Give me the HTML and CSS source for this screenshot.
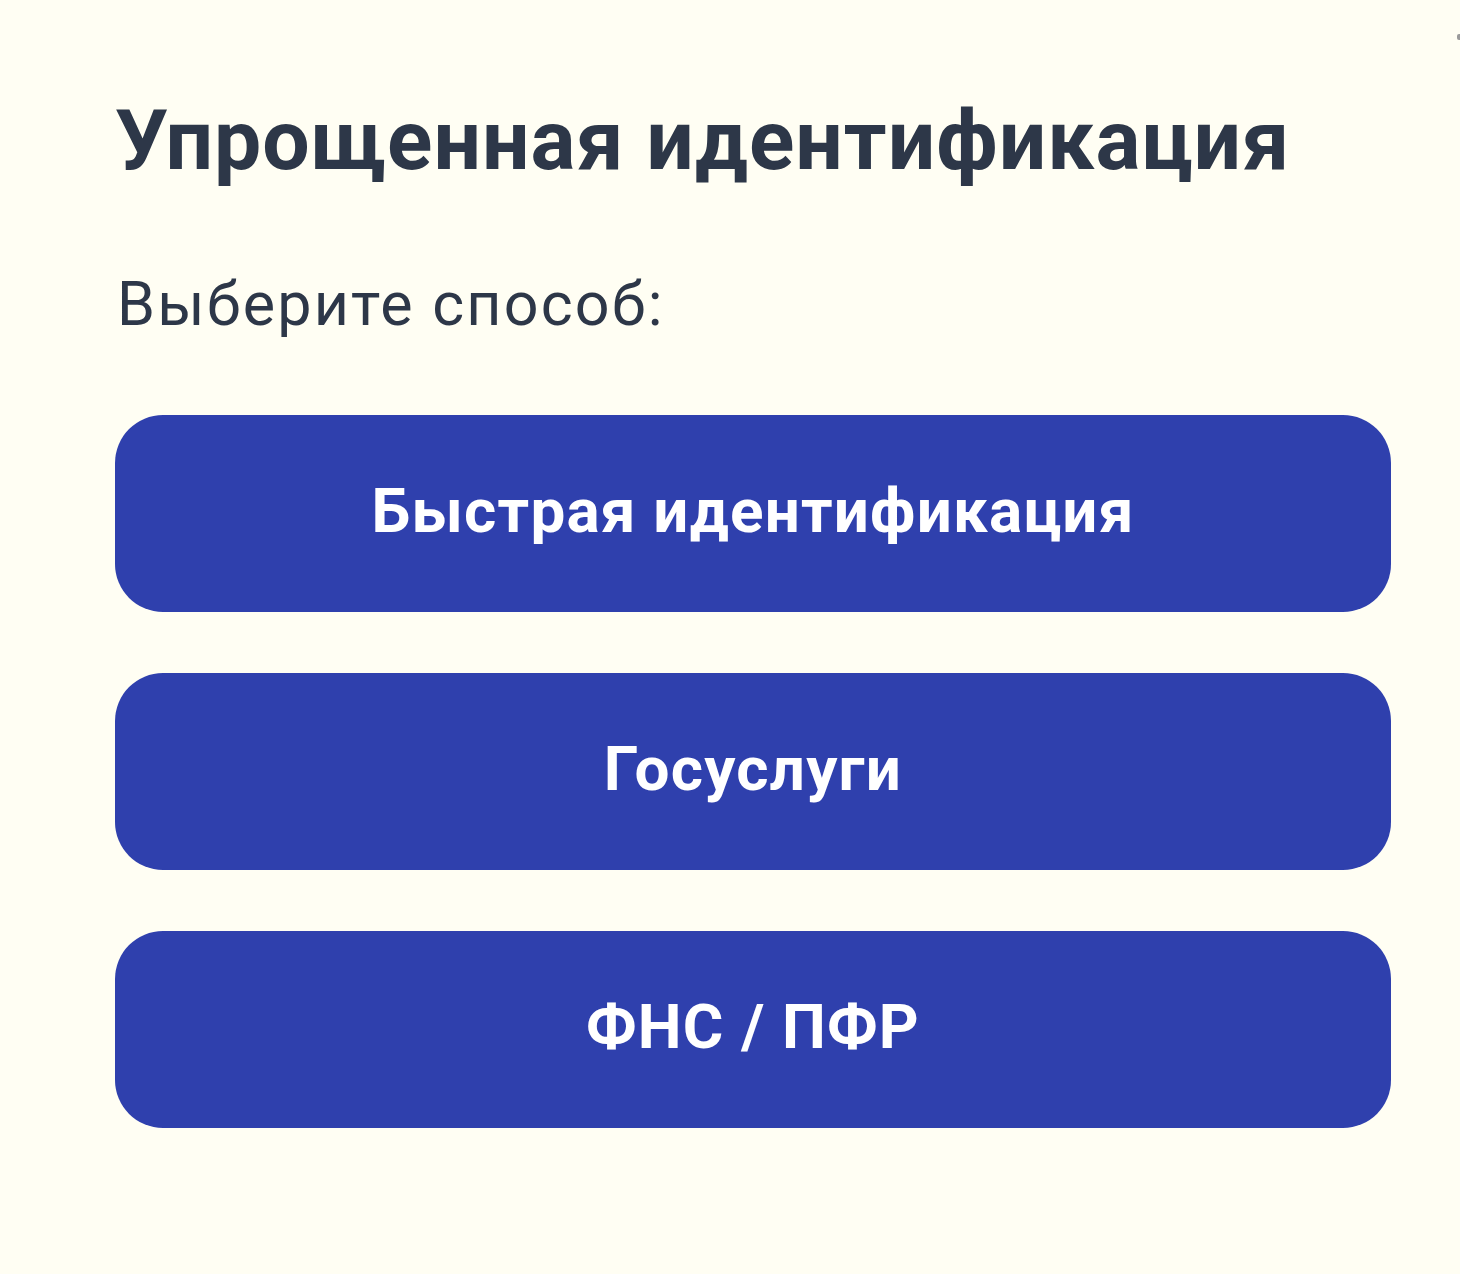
FILE: index.html
```html
<!DOCTYPE html>
<html lang="ru">
<head>
<meta charset="utf-8">
<title>Упрощенная идентификация</title>
<link rel="stylesheet" href="styles.css">
</head>
<body>
<div class="scroll-dot"></div>
<main class="panel">
  <h1 class="title">Упрощенная идентификация</h1>
  <p class="subtitle">Выберите способ:</p>
  <div class="options">
    <button class="option">Быстрая идентификация</button>
    <button class="option">Госуслуги</button>
    <button class="option">ФНС / ПФР</button>
  </div>
</main>
</body>
</html>
```
FILE: styles.css
```css
html, body {
  margin: 0;
  padding: 0;
  background: #fffef3;
}
body {
  font-family: Roboto, "Liberation Sans", sans-serif;
  width: 1460px;
  height: 1274px;
  overflow: hidden;
  position: relative;
}
.panel {
  padding: 99px 69px 0 115px;
  display: flex;
  flex-direction: column;
}
.title {
  margin: 0;
  font-size: 84px;
  line-height: 84px;
  font-weight: 700;
  letter-spacing: 1px;
  color: #2d3748;
}
.subtitle {
  margin: 91px 0 0 2px;
  font-size: 61px;
  line-height: 61px;
  font-weight: 400;
  letter-spacing: 2.2px;
  color: #2d3748;
}
.options {
  margin-top: 80px;
  display: flex;
  flex-direction: column;
  gap: 61px;
}
.option {
  height: 197px;
  border: none;
  border-radius: 48px;
  background: #2f40ad;
  color: #ffffff;
  font-family: Roboto, "Liberation Sans", sans-serif;
  font-size: 62px;
  font-weight: 700;
  letter-spacing: 1.2px;
  padding: 0 0 7px 0;
}
.scroll-dot {
  position: absolute;
  right: 0;
  top: 34px;
  width: 3px;
  height: 6px;
  background: #9a9a9a;
  border-radius: 2px 0 0 2px;
}
```
